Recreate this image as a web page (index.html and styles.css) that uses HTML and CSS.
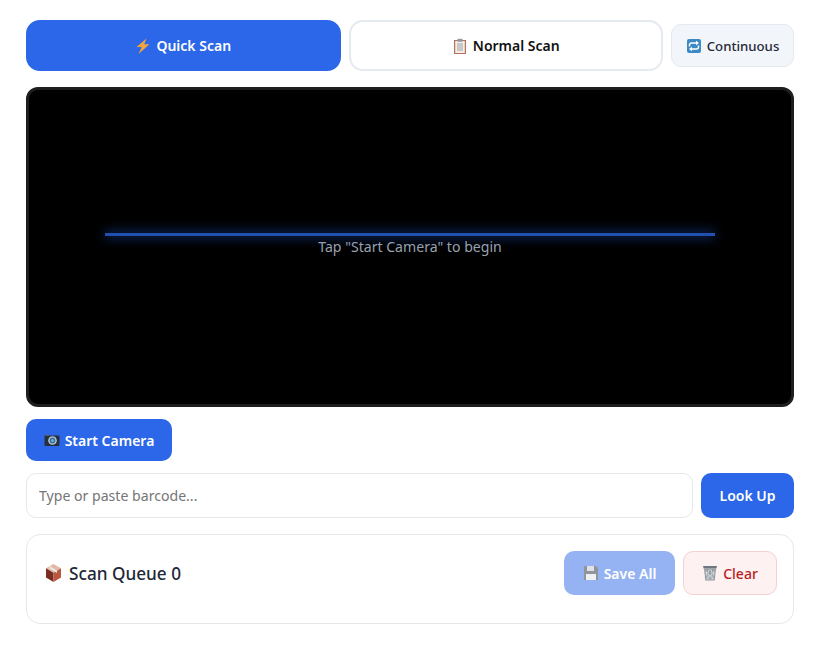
FILE: index.html
```html
<!DOCTYPE html>
<html lang="en">
<head>
<meta charset="utf-8">
<title>Scanner</title>
<link rel="stylesheet" href="styles.css">
</head>
<body>
<main class="page">
  <div class="modes">
    <button class="mode mode-active">
      <svg class="ico" viewBox="0 0 16 16"><path d="M11.500 0.500 1.500 9h5.200L3.500 16 14.500 6.200H9.200z" fill="#f4a53c"/></svg>
      <span>Quick Scan</span>
    </button>
    <button class="mode mode-normal">
      <svg class="ico" viewBox="0 0 16 16"><rect x="2" y="2" width="12" height="14" fill="#b9705a"/><rect x="3.200" y="3" width="9.600" height="12" fill="#f1eeea"/><rect x="5.500" y="0.800" width="5" height="3" fill="#8f9aa3"/><path d="M5 6h6M5 8h6M5 10h6M5 12h6" stroke="#8a8f94" stroke-width=".8"/></svg>
      <span>Normal Scan</span>
    </button>
    <button class="mode mode-cont">
      <svg class="ico" viewBox="0 0 16 16"><rect x="1" y="1" width="14" height="14" rx="2" fill="#3b8ac4"/><path d="M3.500 8.500V7a2 2 0 0 1 2-2h6M12.500 7.500V9a2 2 0 0 1-2 2h-6" fill="none" stroke="#fff" stroke-width="1.500"/><path d="m10 2.800 3 2.200-3 2.200zM6 8.800l-3 2.200 3 2.200z" fill="#fff"/></svg>
      <span>Continuous</span>
    </button>
  </div>

  <section class="viewer">
    <div class="scanline"></div>
    <p class="hint">Tap "Start Camera" to begin</p>
  </section>

  <div class="camera-row">
    <button class="btn btn-primary btn-camera">
      <svg class="ico" viewBox="0 0 16 16"><rect x="0.500" y="3.500" width="15" height="10.500" rx="1" fill="#26303c"/><rect x="2" y="2.500" width="3" height="1.500" fill="#59626c"/><circle cx="8.500" cy="8.500" r="4.300" fill="#c3c9cf"/><circle cx="8.500" cy="8.500" r="2.900" fill="#2f6f9f"/><circle cx="8.500" cy="8.500" r="1.500" fill="#6fb0d8"/></svg>
      <span>Start Camera</span>
    </button>
  </div>

  <form class="lookup" onsubmit="return false">
    <input class="lookup-input" type="text" placeholder="Type or paste barcode...">
    <button class="btn btn-primary btn-lookup">Look Up</button>
  </form>

  <section class="queue">
    <div class="queue-head">
      <h2 class="queue-title">
        <svg class="ico-box" viewBox="0 0 15 18"><path d="M7.500 0 15 4.300 7.500 8.800 0 4.300z" fill="#e3b9a6"/><path d="M0 4.300 7.500 8.800V18L0 13.600z" fill="#7a2e20"/><path d="M15 4.300 7.500 8.800V18L15 13.600z" fill="#b9583f"/><path d="M3.500 2.100 11 6.500V9L3.500 4.500z" fill="#e9e7e3"/></svg>
        <span>Scan Queue 0</span>
      </h2>
      <div class="queue-actions">
        <button class="btn btn-save">
          <svg class="ico" viewBox="0 0 16 16"><path d="M1 1h12l2 2v12H1z" fill="#8f959b"/><rect x="4" y="1" width="7" height="5" fill="#dfe3e7"/><rect x="3" y="9" width="10" height="6" fill="#eef0f2"/></svg>
          <span>Save All</span>
        </button>
        <button class="btn btn-clear">
          <svg class="ico" viewBox="0 0 16 16"><path d="M1 1h14l-.6 2.500H1.600z" fill="#6f7880"/><path d="M2 3.500h12l-1.300 12H3.300z" fill="#8e979e"/><path d="M4 4.500 5.500 15M6.500 4.500l.5 10.500M9.500 4.500 9 15M12 4.500 10.500 15M3 7l9 7M13 7l-9 7M3 10.500l5-6M13 10.500l-5-6" stroke="#e8ebed" stroke-width=".6" fill="none"/></svg>
          <span>Clear</span>
        </button>
      </div>
    </div>
  </section>
</main>
</body>
</html>
```
FILE: styles.css
```css
* { box-sizing: border-box; }
html, body { margin: 0; background: #fff; }
body { font-family: "Noto Sans", "Open Sans", "Liberation Sans", sans-serif; color: #1f2937; }
.page { width: 768px; margin-left: 26px; padding-top: 20px; }
button, input { font-family: inherit; }
button { cursor: pointer; display: inline-flex; align-items: center; justify-content: center; gap: 5px; }
.ico { width: 16px; height: 16px; flex: none; }
.ico-box { width: 15px; height: 18px; flex: none; margin-left: 3px; }

.modes { display: flex; align-items: center; gap: 8px; }
.mode { height: 51px; flex: 1; border-radius: 14px; font-size: 14px; font-weight: 600; border: 2px solid transparent; }
.mode-active { background: #2b67e8; color: #fff; border-color: #2b67e8; }
.mode-normal { background: #fff; color: #111; border-color: #e5e9f0; }
.mode-cont { flex: none; width: 123px; height: 43px; border-radius: 10px; font-size: 13.2px; font-weight: 500; background: #f2f5f9; color: #1f2937; border: 1px solid #e5e9f0; }

.viewer { position: relative; height: 320px; margin-top: 16px; background: #000; border: 3px solid #1e1e1e; border-radius: 12px; display: flex; align-items: center; justify-content: center; }
.scanline { position: absolute; left: 10%; right: 10%; top: 143px; height: 3px; background: #2050b0; box-shadow: 0 0 12px #2563eb; }
.hint { margin: 0 0 2px; font-size: 14.1px; color: #9ca3af; }

.camera-row { margin-top: 12px; display: flex; }
.btn { border: 0; border-radius: 10px; font-size: 14px; font-weight: 600; }
.btn-primary { background: #2b67e8; color: #fff; }
.btn-camera { width: 146px; height: 42px; }

.lookup { display: flex; gap: 8px; margin-top: 12px; }
.lookup-input { flex: 1; height: 45px; padding: 0 12px; border: 1px solid #e5e7eb; border-radius: 10px; font-size: 14.1px; color: #1f2937; background: #fff; outline: 0; }
.lookup-input::placeholder { color: #757575; opacity: 1; }
.btn-lookup { width: 93px; height: 45px; }

.queue { margin-top: 16px; height: 90px; padding: 16px; border: 1px solid #e5e7eb; border-radius: 14px; }
.queue-head { display: flex; align-items: center; justify-content: space-between; }
.queue-title { margin: 0; display: flex; align-items: center; gap: 8px; font-size: 17.2px; font-weight: 500; color: #1f2937; }
.queue-actions { display: flex; gap: 8px; }
.btn-save { width: 111px; height: 44px; background: #95b3f3; color: #fff; }
.btn-clear { width: 94px; height: 44px; background: #fdf1f1; color: #b91c1c; border: 1px solid #f7d0d0; font-weight: 500; }
```
